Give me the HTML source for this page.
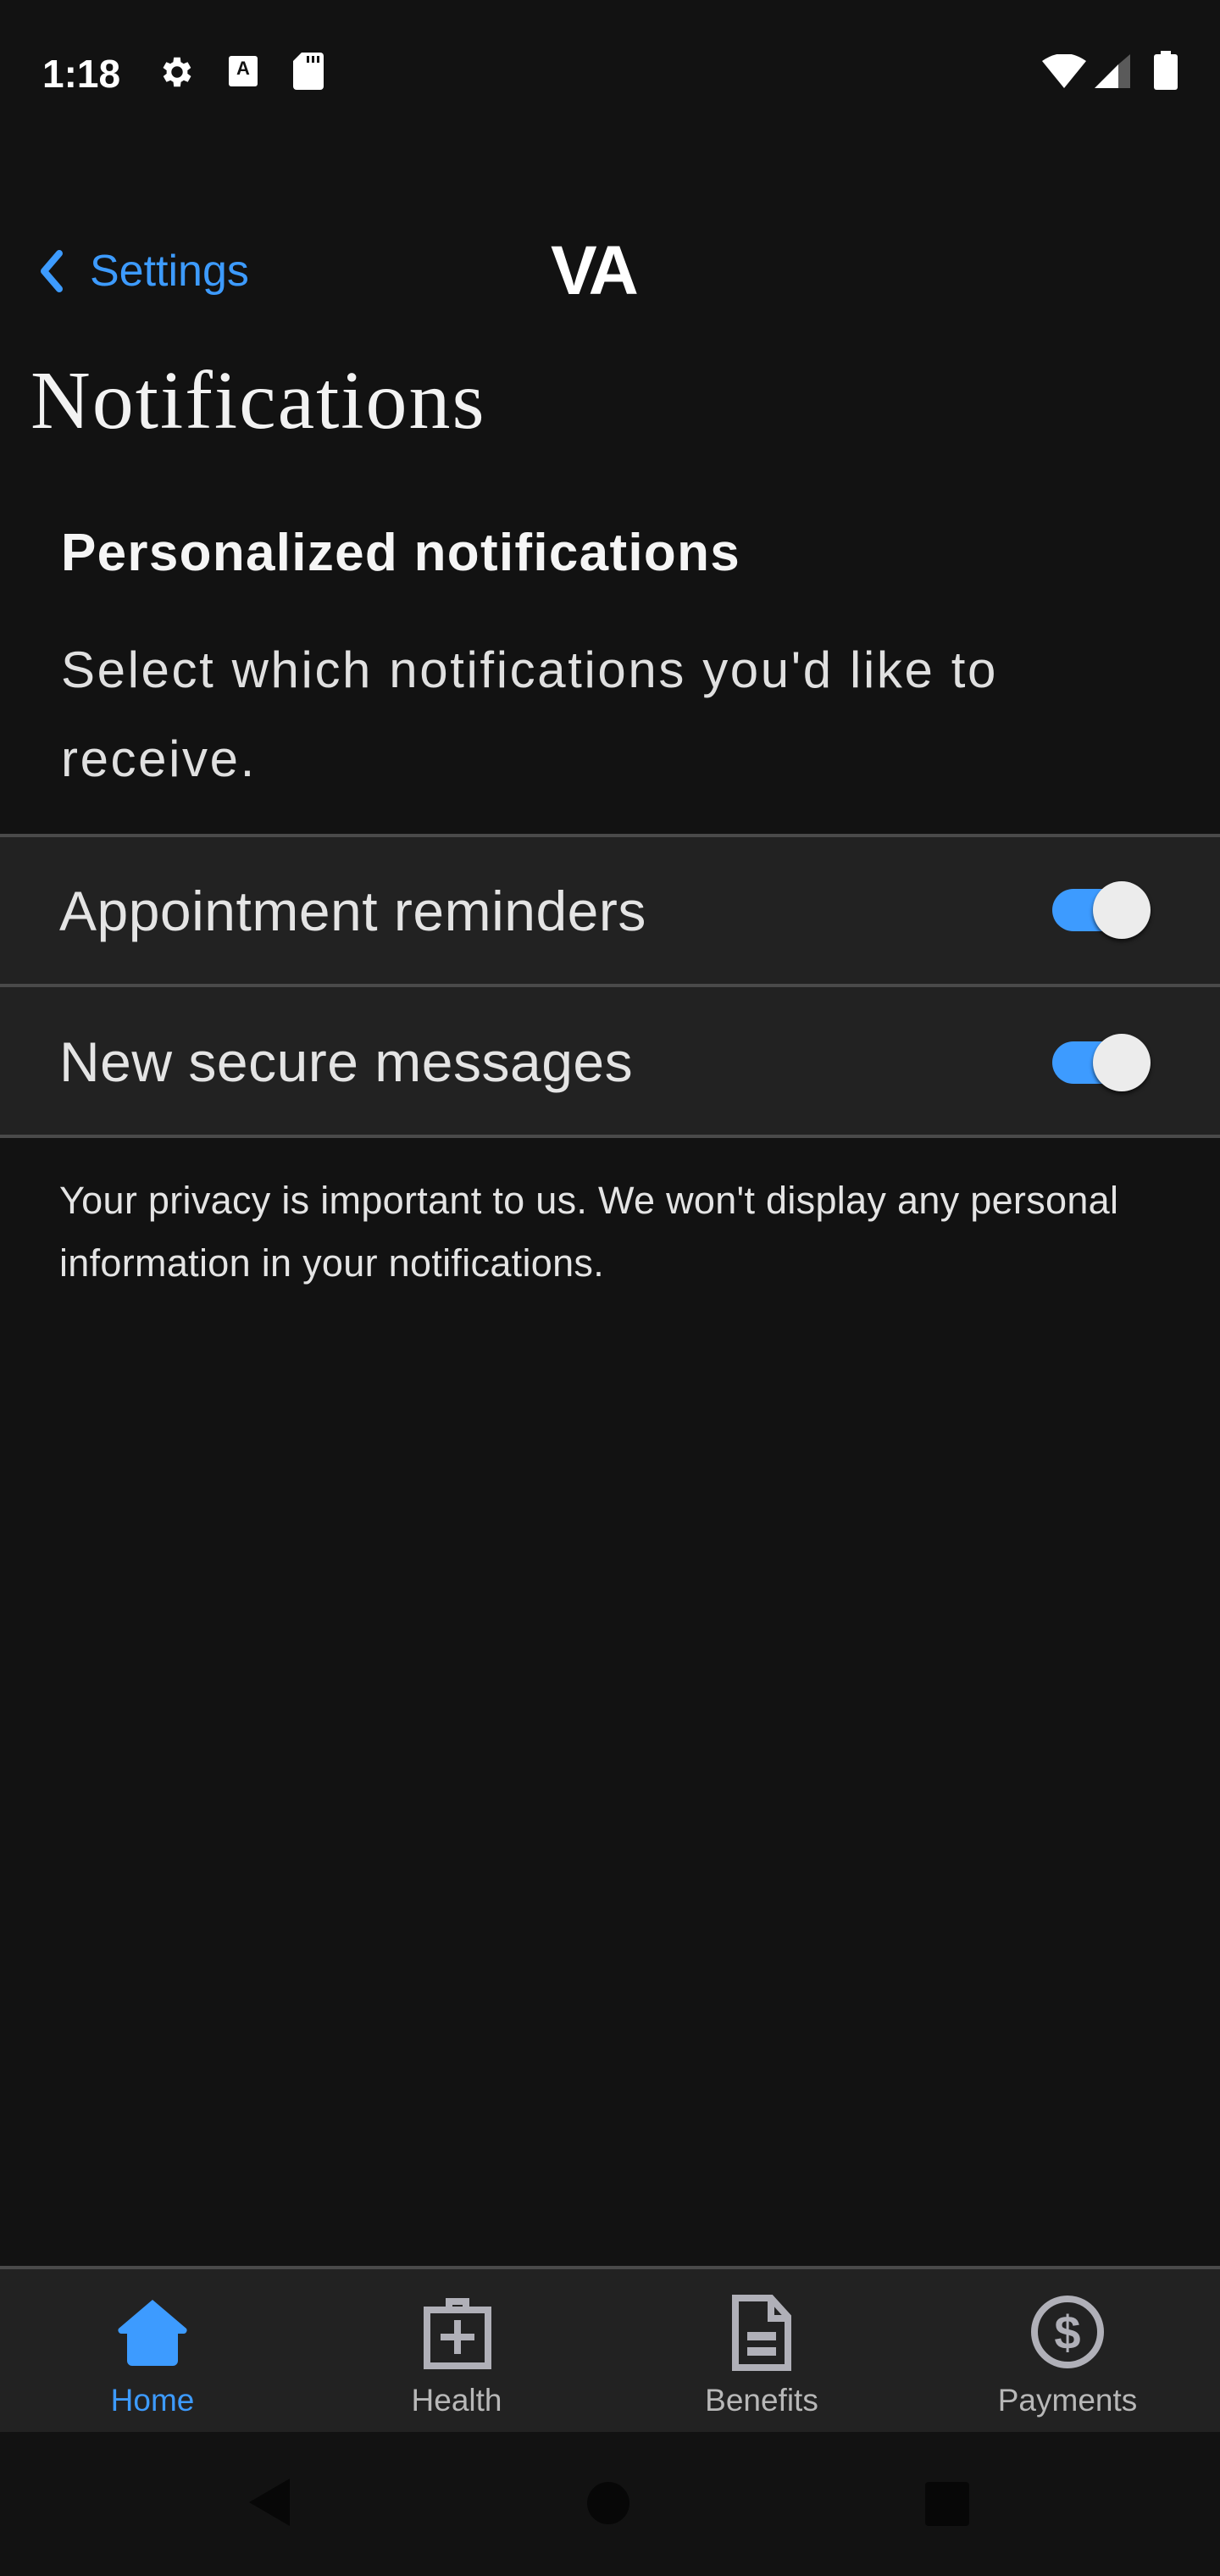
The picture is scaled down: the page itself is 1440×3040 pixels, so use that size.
<!DOCTYPE html>
<html><head><meta charset="utf-8"><style>
*{margin:0;padding:0;box-sizing:border-box}
body{width:1440px;height:3040px;background:#121212;position:relative;overflow:hidden;font-family:"Liberation Sans",sans-serif;color:#f0f0f0}
.a{position:absolute;line-height:1;white-space:nowrap}
.row{position:absolute;left:0;width:1440px;background:#222}
.hr{position:absolute;left:0;width:1440px;height:4px;background:#4a4a4a}
.tr{position:absolute;left:1242px;width:100px;height:50px;border-radius:25px;background:#3d9bff}
.th{position:absolute;left:1290px;width:68px;height:68px;border-radius:50%;background:#ececec;box-shadow:0 3px 5px rgba(0,0,0,.6)}
</style></head><body>
<!-- status bar -->
<div class="a" style="left:50px;top:64px;font-size:46px;font-weight:bold;color:#fff">1:18</div>
<svg style="position:absolute;left:186px;top:62px" width="46" height="46" viewBox="0 0 24 24"><path fill="#fff" d="M19.4 13a7.5 7.5 0 0 0 0-2l2.1-1.6-2-3.5-2.5 1a7 7 0 0 0-1.7-1L15 3h-4l-.4 2.9a7 7 0 0 0-1.7 1l-2.5-1-2 3.5L6.6 11a7.5 7.5 0 0 0 0 2l-2.1 1.6 2 3.5 2.5-1a7 7 0 0 0 1.7 1L11 21h4l.4-2.9a7 7 0 0 0 1.7-1l2.5 1 2-3.5zM13 15.5a3.5 3.5 0 1 1 0-7 3.5 3.5 0 0 1 0 7z" transform="translate(-1 0)"/></svg>
<div style="position:absolute;left:270px;top:66px;width:34px;height:36px;background:#fff;border-radius:3px;color:#121212;font:bold 22px 'Liberation Sans';text-align:center;line-height:30px">A</div>
<svg style="position:absolute;left:346px;top:62px" width="36" height="44" viewBox="0 0 18 22"><path fill="#fff" d="M5 0h11a2 2 0 0 1 2 2v18a2 2 0 0 1-2 2H2a2 2 0 0 1-2-2V5z"/><path fill="#121212" d="M8 2h1.5v4H8zM11 2h1.5v4H11zM14 2h1.5v4H14z"/></svg>
<svg style="position:absolute;left:1230px;top:64px" width="52" height="40" viewBox="0 0 26 20"><path fill="#fff" d="M13 20L0 4Q13-5 26 4z"/></svg>
<svg style="position:absolute;left:1292px;top:64px" width="42" height="40" viewBox="0 0 21 20"><path fill="#fff" d="M0 20L14 6v14z"/><path fill="#5a5a5a" d="M14 6L21 0v20h-7z"/></svg>
<div style="position:absolute;left:1362px;top:64px;width:28px;height:42px;background:#fff;border-radius:3px"></div>
<div style="position:absolute;left:1370px;top:60px;width:12px;height:6px;background:#fff"></div>
<!-- header -->
<svg style="position:absolute;left:44px;top:295px" width="32" height="50" viewBox="0 0 16 25"><path d="M13 2L4 12.5 13 23" stroke="#3d9bff" stroke-width="4" fill="none" stroke-linecap="round" stroke-linejoin="round"/></svg>
<div class="a" style="left:106px;top:294px;font-size:52px;color:#3d9bff">Settings</div>
<div class="a" style="left:650px;top:279px;font-size:82px;font-weight:bold;color:#fff;letter-spacing:-4px">VA</div>
<div class="a" style="left:36px;top:424px;font-size:98px;font-family:'Liberation Serif',serif;color:#f2f2f2;letter-spacing:2px">Notifications</div>
<div class="a" style="left:72px;top:622px;font-size:62px;font-weight:bold;color:#f5f5f5;letter-spacing:1.3px">Personalized notifications</div>
<div style="position:absolute;left:72px;top:738px;font-size:60px;line-height:105px;color:#e0e0e0;width:1360px;letter-spacing:2.6px;white-space:nowrap">Select which notifications you'd like to<br>receive.</div>
<!-- rows -->
<div class="row" style="top:986px;height:355px"></div>
<div class="hr" style="top:984px"></div>
<div class="hr" style="top:1161px"></div>
<div class="hr" style="top:1339px"></div>
<div class="a" style="left:70px;top:1042px;font-size:66px;color:#e4e4e4;letter-spacing:0.5px">Appointment reminders</div>
<div class="a" style="left:70px;top:1220px;font-size:66px;color:#e4e4e4;letter-spacing:0.5px">New secure messages</div>
<div class="tr" style="top:1049px"></div><div class="th" style="top:1040px"></div>
<div class="tr" style="top:1229px"></div><div class="th" style="top:1220px"></div>
<div style="position:absolute;left:70px;top:1380px;font-size:45px;line-height:74px;color:#e4e4e4;width:1370px;letter-spacing:0.3px;white-space:nowrap">Your privacy is important to us. We won't display any personal<br>information in your notifications.</div>
<!-- bottom nav -->
<div class="hr" style="top:2674px"></div>
<div style="position:absolute;left:0;top:2678px;width:1440px;height:192px;background:#222"></div>
<svg style="position:absolute;left:136px;top:2712px" width="88" height="80" viewBox="0 0 44 40"><path fill="#3d9bff" d="M22 1L2 18a2 2 0 0 0 2 3h3v16a3 3 0 0 0 3 3h24a3 3 0 0 0 3-3V21h3a2 2 0 0 0 2-3z"/></svg>
<svg style="position:absolute;left:496px;top:2710px" width="88" height="86" viewBox="0 0 44 43"><path fill="none" stroke="#b0b0b8" stroke-width="4" d="M17 8V3h10v5M4 8h36v33H4z"/><path fill="#b0b0b8" d="M20 14h4v8h8v4h-8v8h-4v-8h-8v-4h8z"/></svg>
<svg style="position:absolute;left:864px;top:2708px" width="70" height="90" viewBox="0 0 35 45"><path fill="none" stroke="#b0b0b8" stroke-width="4" d="M2 2h21l10 11v30H2z"/><path fill="#b0b0b8" d="M21 2h4v10h8v4H21zM9 22h17v5H9zM9 31h17v5H9z"/></svg>
<svg style="position:absolute;left:1216px;top:2708px" width="88" height="88" viewBox="0 0 44 44"><circle cx="22" cy="22" r="19.5" fill="none" stroke="#b0b0b8" stroke-width="4"/><text x="22" y="32" text-anchor="middle" font-family="Liberation Sans" font-weight="bold" font-size="28" fill="#b0b0b8">$</text></svg>
<div class="a" style="left:180px;top:2814px;font-size:37px;color:#3d9bff;transform:translateX(-50%)">Home</div>
<div class="a" style="left:539px;top:2814px;font-size:37px;color:#b8b8b8;transform:translateX(-50%)">Health</div>
<div class="a" style="left:899px;top:2814px;font-size:37px;color:#b8b8b8;transform:translateX(-50%)">Benefits</div>
<div class="a" style="left:1260px;top:2814px;font-size:37px;color:#b8b8b8;transform:translateX(-50%)">Payments</div>
<!-- system nav -->
<svg style="position:absolute;left:290px;top:2925px" width="56" height="56" viewBox="0 0 28 28"><path fill="#070707" d="M26 0v28L2 14z"/></svg>
<div style="position:absolute;left:693px;top:2929px;width:50px;height:50px;border-radius:50%;background:#070707"></div>
<div style="position:absolute;left:1092px;top:2929px;width:52px;height:52px;border-radius:4px;background:#070707"></div>
</body></html>
